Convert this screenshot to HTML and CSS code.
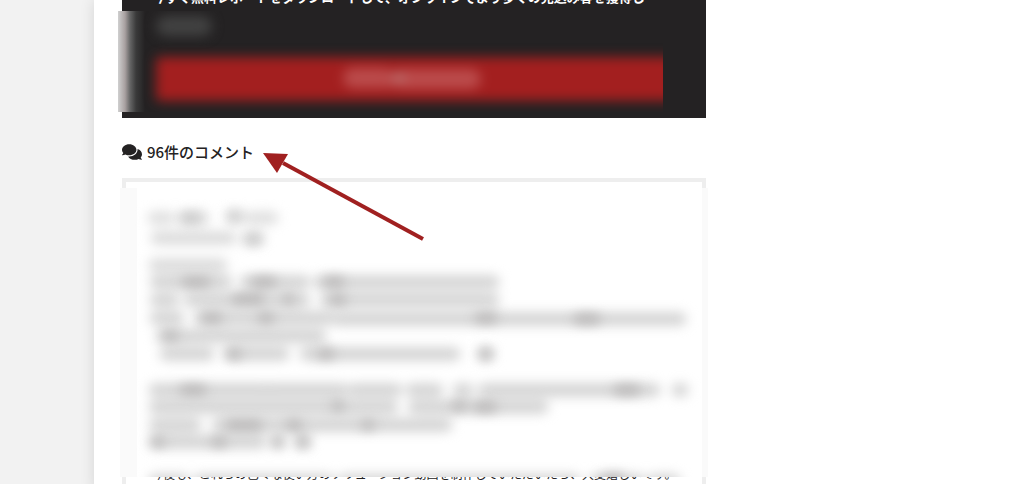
FILE: index.html
```html
<!DOCTYPE html>
<html lang="ja">

<head>
<title>96件のコメント</title>
<meta charset="UTF-8">
<meta name="viewport" content="width=device-width, initial-scale=1">
<link rel="stylesheet" href="styles.css">
</head>

<body>
  <main class="page">
    <div class="content">

      <section class="promo">
        <p class="promo-text">今すぐ無料レポートをダウンロードして、オンラインでより多くの見込み客を獲得し</p>
        <div class="promo-blur">
          <div class="promo-line"></div>
          <button class="promo-button" type="button">
            <svg width="160" height="36" viewBox="0 0 160 36">
              <path d="M20 17h30M68 18h70" stroke="#bb4b4b" stroke-width="20" stroke-linecap="round"/>
              <path d="M46 18h24" stroke="#bb4b4b" stroke-width="17"/>
              <path d="M62 17h8" stroke="#b8807e" stroke-width="5" stroke-linecap="round"/>
            </svg>
          </button>
        </div>
      </section>

      <h3 class="comments-title">
        <svg class="icon" width="20" height="16" viewBox="0 32 576 448">
          <path fill="currentColor" d="M416 192c0-88.400-93.100-160-208-160S0 103.600 0 192c0 34.300 14.100 65.900 38 92-13.400 30.200-35.500 54.200-35.800 54.500-2.200 2.300-2.800 5.700-1.500 8.700S4.800 352 8 352c36.600 0 66.900-12.300 88.700-25 32.200 15.700 70.300 25 111.300 25 114.900 0 208-71.600 208-160zm122 220c23.900-26 38-57.700 38-92 0-66.900-53.500-124.200-129.300-148.100.900 6.600 1.300 13.300 1.300 20.100 0 105.900-107.700 192-240 192-10.800 0-21.300-.800-31.700-1.900C207.800 439.600 281.800 480 368 480c41 0 79.100-9.200 111.300-25 21.800 12.700 52.100 25 88.700 25 3.200 0 6.100-1.900 7.300-4.800 1.300-2.900.700-6.300-1.500-8.700-.300-.300-22.400-24.200-35.800-54.500z"/>
        </svg>
        96件のコメント
      </h3>

      <article class="comment">
        <div class="comment-blur">
          <svg viewBox="120 188 588 289" fill="none" stroke-linecap="round">
            <!-- lines of the comment -->
            <g class="smudge" stroke="#d2d2d2" stroke-width="13">
              <path d="M154 218h14M183 218h20M232 217h8M252 218h20" stroke="#dedede"/>
              <path d="M157 238h73M248 239h10" stroke="#dadada"/>
              <path d="M155 265h66" stroke="#dadada"/>
              <path d="M156 282h70M246 282h58M320 282h173"/>
              <path d="M156 300h17M190 300h114M326 300h167"/>
              <path d="M156 318h22M200 318h128M338 319h342"/>
              <path d="M162 336h74M238 336h82"/>
              <path d="M166 354h42M230 354h53M306 354h148M484 354h4"/>
              <path d="M155 390h112M268 390h74M354 390h42M412 390h25M459 390h8M484 390h170M678 390h4"/>
              <path d="M155 407h154M306 407h86M414 407h128"/>
              <path d="M155 425h40M218 425h228"/>
              <path d="M155 442h32M188 442h72M277 442h2M300 442h5"/>
              <path d="M155 481h28M200 481h128M344 481h230M595 481h44M654 481h20"/>
            </g>
            <!-- denser characters -->
            <g class="smudge" stroke="#b5b3b3" stroke-width="9">
              <path d="M186 218h10M233 216h2M251 239h5" stroke="#c4c4c4"/>
              <path d="M186 282h20M256 282h16M328 282h12M236 299h24M287 299h3M334 300h8"/>
              <path d="M206 318h12M262 318h8M479 318h14M578 319h18"/>
              <path d="M168 336h6M231 354h6M322 354h8M484 354h3"/>
              <path d="M184 390h18M618 390h18M336 406h4M456 406h6M478 407h14"/>
              <path d="M230 425h28M290 425h8M366 425h4M156 442h4M216 442h6M277 442h1M302 442h2M606 479h14"/>
            </g>
          </svg>
        </div>
        <p class="comment-text">今後も、これらの色々な使い方のソリューション動画を制作していただいたら、大変嬉しいです。</p>
      </article>

      <svg class="arrow" width="164" height="92" viewBox="0 0 164 92">
        <path d="M20 12L160 88" stroke="#a02020" stroke-width="4"/>
        <path d="M0 2L25 3L14 22Z" fill="#a02020"/>
      </svg>

    </div>
  </main>
</body>
</html>
```
FILE: styles.css
```css
html, body {
  margin: 0;
  padding: 0;
  height: 100%;
  overflow: hidden;
  background: #f2f2f2;
  color: #242223;
  font-family: "Noto Sans CJK JP", "Noto Sans", sans-serif;
}

.page {
  box-sizing: border-box;
  min-height: 100%;
  margin-left: 94px;
  padding: 0 28px;
  background: #fff;
  box-shadow: 0 0 14px rgba(0,0,0,0.12);
}

.content {
  position: relative;
  max-width: 584px;
}

/* promo box */
.promo {
  display: flow-root;
  padding-bottom: 6px;
  background: #242223;
}

.promo-text {
  display: flex;
  align-items: flex-end;
  height: 7px;
  margin: 0 0 4px 30px;
  line-height: 20px;
  font-size: 13px;
  font-weight: bold;
  color: #fff;
  white-space: nowrap;
}

.promo-blur {
  box-sizing: border-box;
  display: flow-root;
  height: 101px;
  margin: 0 43px 0 -4px;
  padding-left: 38px;
  overflow: hidden;
  background: linear-gradient(90deg, #d0d0d0 0, #a8a0a0 7px, #666 12px, #3a3a3a 18px, #242223 27px);
}

.promo-line {
  width: 56px;
  height: 20px;
  margin-top: 5px;
  border-radius: 10px;
  background: #424242;
  filter: blur(6px);
}

.promo-button {
  box-sizing: border-box;
  display: flex;
  align-items: center;
  justify-content: center;
  width: calc(100% + 20px);
  height: 44px;
  margin-top: 21px;
  padding: 0 14px 0 0;
  border: 0;
  border-radius: 4px;
  background: #a31f1f;
  filter: blur(6px);
}

/* comments */
.comments-title {
  display: flex;
  align-items: center;
  gap: 5px;
  margin: 22px 0 14px;
  font-size: 15px;
  line-height: 24px;
  font-weight: 500;
}

.comment {
  border: 4px solid #eee;
  border-bottom: 0;
  padding: 6px 25px 8px;
}

.comment-blur {
  position: relative;
  margin: 0 -31px;
  overflow: hidden;
  background: linear-gradient(90deg, #fafafa 17px, #fff 17px, #fff calc(100% - 6px), #fafafa calc(100% - 6px));
}

.comment-blur svg {
  display: block;
  width: 100%;
}

.smudge {
  filter: blur(6px);
}

.comment-text {
  margin: -12px 0 0;
  font-size: 12px;
  line-height: 18px;
  white-space: nowrap;
}

/* pointer to the comment count */
.arrow {
  position: absolute;
  left: 141px;
  top: 151px;
}
```
